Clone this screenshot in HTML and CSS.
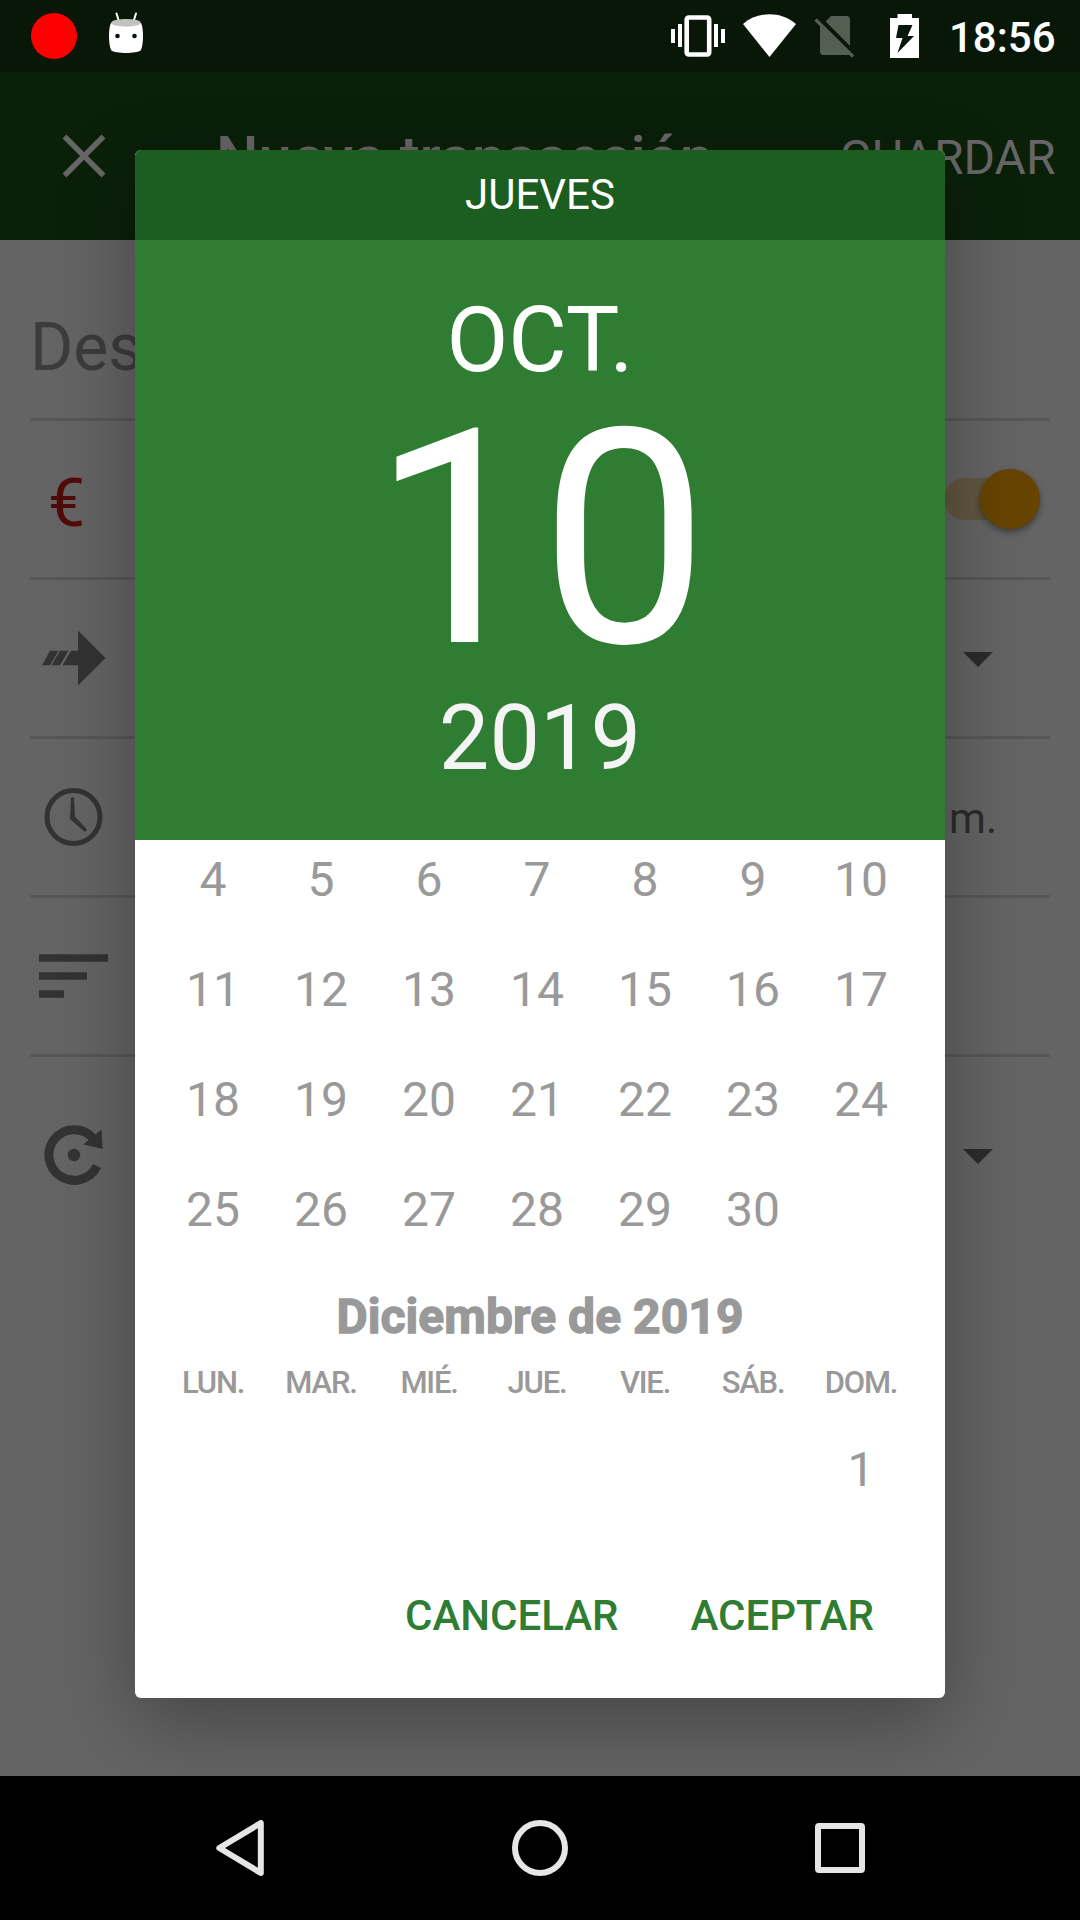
FILE: index.html
```html
<!DOCTYPE html>
<html lang="es">
<head>
<meta charset="utf-8">
<title>Nueva transacción</title>
<link rel="stylesheet" href="styles.css">
</head>
<body>
<div class="screen">
  <header class="status">
    <svg class="status-left" width="160" height="72" viewBox="0 0 160 72">
      <circle cx="54" cy="36" r="23" fill="#f00"/>
      <path d="M116.500 13.500l2.500 8M136 13.500l-2.500 8" stroke="#fff" stroke-width="2" stroke-linecap="round"/>
      <path d="M111 23h30c1.500 3 2 8 2 13s-.5 11-2.300 14.500c-4 3.300-25.400 3.300-29.400 0C109.500 47 109 41 109 36s.5-10 2-13z" fill="#fff"/>
      <ellipse cx="126" cy="22.800" rx="14.700" ry="3.900" fill="#c0c4bf"/>
      <circle cx="117.500" cy="36" r="2.300" fill="#081708"/><circle cx="134.500" cy="36" r="2.300" fill="#081708"/>
    </svg>
    <svg class="status-right" width="260" height="72" viewBox="665 0 260 72">
      <rect x="686.700" y="17.500" width="22.500" height="37" rx="2" fill="none" stroke="#fff" stroke-width="4.600"/>
      <path d="M671 29h4v14h-4zM678 24h4v23h-4zM714 24h4v23h-4zM721 29h4v14h-4z" fill="#fff"/>
      <path d="M743 24C758 11 781 11 796 24L769.500 57z" fill="#fff"/>
      <path d="M831 16h15.500q3.500 0 3.500 3.500V46L825.700 21.500zM820 24.500L849.500 54q-1 1-2.500 1H823.500q-3.500 0-3.500-3.500z" fill="#535f52"/>
      <path d="M815.500 19.500L853 56.500" stroke="#535f52" stroke-width="3.200"/>
      <path fill-rule="evenodd" d="M897.500 14h14.500v4h7v40h-29V18h7.500zM898.500 25L896 38h6.500L897.500 53L914 36h-6.500L912.500 25z" fill="#fff"/>
    </svg>
    <span class="clock">18:56</span>
  </header>

  <div class="appbar">
    <svg class="close" width="48" height="48" viewBox="0 0 48 48"><path d="M4.500 4.500l39 39M43.500 4.500l-39 39" stroke="#666" stroke-width="5.400"/></svg>
    <h1 class="title">Nueva transacción</h1>
    <span class="save">GUARDAR</span>
  </div>

  <main class="form">
    <div class="row row-desc"><span class="hint">Descripción</span></div>
    <div class="row">
      <span class="icon euro">€</span>
      <span class="switch"><span class="thumb"></span></span>
    </div>
    <div class="row">
      <svg class="icon" width="90" height="60" viewBox="30 628 90 60" fill="#333"><path d="M78 630.500L105.500 658 78 685.500zM71 650.700h8v14.600H62.500zM60 650.700h8.500l-8.500 14.600h-8.500zM50 650.700h8.500l-8.500 14.600h-8z"/></svg>
      <svg class="caret" width="30" height="15" viewBox="0 0 30 15"><path d="M0 0h30L15 15z" fill="#2b2b2b"/></svg>
    </div>
    <div class="row">
      <svg class="icon" width="90" height="60" viewBox="30 787 90 60"><circle cx="73.500" cy="817" r="26.500" fill="none" stroke="#333" stroke-width="5"/><path d="M71 798q1.500-2 3 0l1 18.500L87 829.500l-2 2.500L70 819z" fill="#333"/></svg>
      <span class="time">6:56 p. m.</span>
    </div>
    <div class="row">
      <svg class="icon" width="90" height="60" viewBox="30 946 90 60" fill="#333"><path d="M39 954.300h69v7.500H39zM39 972.300h48v7.500H39zM39 990.300h25v7.500H39z"/></svg>
    </div>
    <div class="row row-last">
      <svg class="icon" width="90" height="64" viewBox="30 1123 90 64"><path d="M92.500 1137.500A25.300 25.300 0 1 0 97 1166" fill="none" stroke="#333" stroke-width="9"/><path d="M101.500 1129.500l1.200 19.500-19.500-4.500z" fill="#333"/><circle cx="74" cy="1155" r="6.200" fill="#333"/></svg>
      <svg class="caret" width="30" height="15" viewBox="0 0 30 15"><path d="M0 0h30L15 15z" fill="#2b2b2b"/></svg>
    </div>
  </main>

  <section class="dialog" role="dialog">
    <div class="weekday">JUEVES</div>
    <div class="date">
      <div class="month">OCT.</div>
      <div class="day">10</div>
      <div class="year">2019</div>
    </div>
    <div class="calendar">
      <div class="days november">
        <span>4</span><span>5</span><span>6</span><span>7</span><span>8</span><span>9</span><span>10</span>
        <span>11</span><span>12</span><span>13</span><span>14</span><span>15</span><span>16</span><span>17</span>
        <span>18</span><span>19</span><span>20</span><span>21</span><span>22</span><span>23</span><span>24</span>
        <span>25</span><span>26</span><span>27</span><span>28</span><span>29</span><span>30</span>
      </div>
      <h2 class="month-title">Diciembre de 2019</h2>
      <div class="labels"><span>LUN.</span><span>MAR.</span><span>MIÉ.</span><span>JUE.</span><span>VIE.</span><span>SÁB.</span><span>DOM.</span></div>
      <div class="days"><span class="sunday">1</span></div>
    </div>
    <div class="actions"><span>CANCELAR</span><span>ACEPTAR</span></div>
  </section>

  <nav class="nav">
    <svg width="60" height="60" viewBox="0 0 60 60"><path d="M50.800 5v50L9.300 30z"/></svg>
    <svg width="60" height="60" viewBox="0 0 60 60"><circle cx="30" cy="30" r="25"/></svg>
    <svg width="60" height="60" viewBox="0 0 60 60"><rect x="8" y="8" width="44" height="44" rx="1"/></svg>
  </nav>
</div>
</body>
</html>
```
FILE: styles.css
```css
* { box-sizing: border-box; }
body { margin: 0; font-family: Roboto, sans-serif; background: #000; }
h1, h2 { margin: 0; font-weight: 500; }
.screen { position: relative; display: flex; flex-direction: column; width: 1080px; height: 1920px; overflow: hidden; background: #646464; }

.status { display: flex; height: 72px; background: #081708; color: #fff; }
.status-right { margin-left: 505px; }
.clock { margin-left: 24px; font-size: 42px; font-weight: 500; line-height: 75px; }

.appbar { display: flex; align-items: center; height: 168px; padding: 0 24.500px 0 60px; background: #0a2009; color: #666; }
.title { margin-left: 108px; padding-top: 4px; font-size: 60px; line-height: 72px; letter-spacing: -.1px; }
.save { margin-left: auto; padding-top: 3px; font-size: 48px; line-height: 60px; }

.form { flex: 1; padding: 0 30px; }
.row { display: flex; align-items: center; height: 159px; border-bottom: 3px solid #575757; }
.row-desc { height: 181px; padding-top: 37px; }
.row-last { height: 196px; border-bottom: 0; }
.hint { font-size: 66px; line-height: 80px; color: #3c3c3c; }
.icon { flex: none; }
.euro { padding: 9px 0 0 18px; font-size: 66px; line-height: 80px; color: #520b0b; }
.caret { margin: 3px 57px 0 auto; }
.time { margin-left: auto; margin-right: 53px; padding-top: 3px; font-size: 42px; color: #2b2b2b; }
.switch { display: flex; align-items: center; justify-content: flex-end; width: 86px; height: 42px; margin: 0 20px 0 auto; border-radius: 21px; background: #61563f; }
.thumb { flex: none; width: 60px; height: 60px; margin: -1px -9.500px 0 0; border-radius: 50%; background: #640; box-shadow: 0 3px 6px rgba(0, 0, 0, .4); }

.dialog { position: absolute; left: 135px; top: 150px; display: flex; flex-direction: column; width: 810px; height: 1548px; overflow: hidden; border-radius: 6px; background: #fff; box-shadow: 0 24px 80px rgba(0, 0, 0, .31); text-align: center; }
.weekday { height: 90px; background: #1b5e20; color: #fff; font-size: 42px; line-height: 90px; }
.date { height: 600px; padding-top: 51px; background: #2e7d32; color: #fff; }
.month { font-size: 90px; line-height: 100px; }
.day { font-size: 300px; line-height: 298px; }
.year { font-size: 90px; line-height: 100px; color: #f4f4f4; }
.calendar { height: 693px; padding: 0 24px; overflow: hidden; color: #999; }
.days { display: grid; grid-template-columns: repeat(7, 108px); font-size: 48px; line-height: 110px; }
.november { margin-top: -15px; }
.month-title { height: 105px; font-size: 48px; font-weight: 700; line-height: 103px; letter-spacing: .05px; -webkit-text-stroke: 1.300px #999; }
.labels { display: grid; grid-template-columns: repeat(7, 108px); margin-bottom: 20px; font-size: 31px; font-weight: 500; line-height: 25px; letter-spacing: -1.200px; }
.sunday { grid-column: 7; }
.actions { display: flex; justify-content: flex-end; gap: 72px; padding-right: 71px; color: #2e7d32; font-size: 42px; font-weight: 500; line-height: 165px; }

.nav { display: flex; align-items: center; justify-content: center; gap: 240px; height: 144px; background: #000; }
.nav svg { fill: none; stroke: #e6e6e6; stroke-width: 6; stroke-linejoin: round; }
```
